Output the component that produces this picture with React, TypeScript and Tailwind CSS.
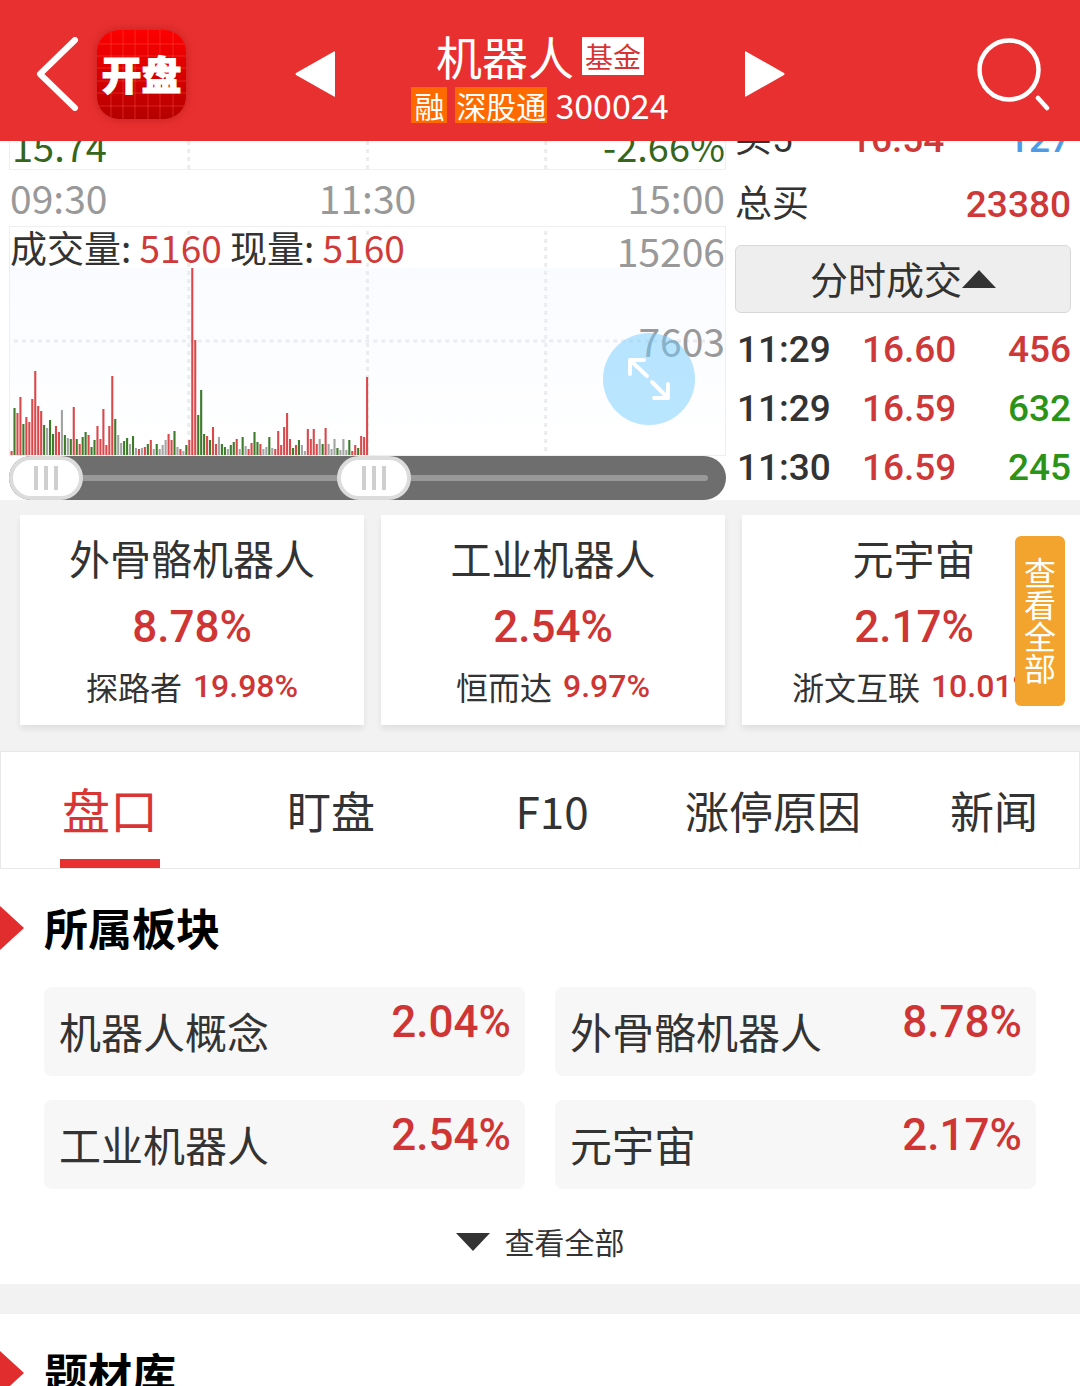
import { useState } from 'react';

/* ─── Data ──────────────────────────────────────────────────────────────────── */
type Tone = 'r' | 'g' | 'n';

const TONE_FILL: Record<Tone, string> = { r: '#d9494c', g: '#3d7a2a', n: '#a3a3a3' };

// one entry per minute: tone + height of the bar
const VOLUME =
  'r4 g47 r42 r58 g31 r38 r33 r56 r84 r49 r44 g30 n27 g35 g21 r29 r23 n45 g20 n17 ' +
  'g16 r48 g16 r11 g18 g23 r20 g8 g15 r29 r16 r46 r10 r29 r79 g36 n20 n12 g14 g17 ' +
  'n11 g19 n7 r6 n7 r8 g11 r15 n6 g11 n6 n10 n15 r21 r15 g24 n8 r6 n4 g10 ' +
  'r15 r187 r115 g40 g65 g21 r19 g15 r28 r11 n18 g11 g8 n6 g10 g13 r16 n6 g18 n9 ' +
  'r6 r12 g23 g13 r11 n6 n8 g18 n7 r6 r24 r10 r28 r42 r16 g7 r10 g15 n10 n4 ' +
  'r26 r16 r26 r11 n16 g11 r27 n11 n6 n16 g7 n5 n16 n5 g15 r4 r10 g7 r19 r18 r78';

const bars = VOLUME.split(' ').map(s => ({ tone: s[0] as Tone, h: Number(s.slice(1)) }));

const trades = [
  { time: '11:29', price: '16.60', vol: '456', up: true },
  { time: '11:29', price: '16.59', vol: '632', up: false },
  { time: '11:30', price: '16.59', vol: '245', up: false },
];

const themes = [
  { name: '外骨骼机器人', pct: '8.78%', lead: '探路者', leadPct: '19.98%' },
  { name: '工业机器人', pct: '2.54%', lead: '恒而达', leadPct: '9.97%' },
  { name: '元宇宙', pct: '2.17%', lead: '浙文互联', leadPct: '10.01%' },
];

const boards = [
  { name: '机器人概念', pct: '2.04%' },
  { name: '外骨骼机器人', pct: '8.78%' },
  { name: '工业机器人', pct: '2.54%' },
  { name: '元宇宙', pct: '2.17%' },
];

const TABS = ['盘口', '盯盘', 'F10', '涨停原因', '新闻'];

/* ─── Header ────────────────────────────────────────────────────────────────── */
function Header() {
  return (
    <header className="grid h-[141px] shrink-0 grid-cols-[1fr_490px_1fr] items-center bg-[#e93030] px-[30px] pt-[7px] text-white">
      <div className="flex items-center gap-[11px]">
        <button aria-label="返回" className="pl-[6px]">
          <svg width="50" height="74" viewBox="0 0 50 74" fill="none" stroke="currentColor" strokeWidth="6" strokeLinecap="round" strokeLinejoin="round">
            <path d="M39 3 4 37 39 71" />
          </svg>
        </button>
        <a href="#home" aria-label="开盘" className="block rounded-[22px] shadow-[0_0_10px_rgba(120,0,0,0.35)]">
          <svg width="89" height="89" viewBox="0 0 89 89">
            <defs>
              <linearGradient id="logo" x1="0" y1="0" x2="0" y2="1">
                <stop offset="0" stopColor="#fe0000" />
                <stop offset="1" stopColor="#b40000" />
              </linearGradient>
            </defs>
            <rect width="89" height="89" rx="22" fill="url(#logo)" />
            <path d="M14 2V87M26 0V89M38 0V89M51 0V89M63 0V89M76 2V87M2 14H87M0 26H89M0 38H89M0 51H89M0 63H89M2 76H87" stroke="#ff5a4a" strokeOpacity="0.4" />
            <text x="44.500" y="60" textAnchor="middle" fontSize="40" fontWeight="900" fill="#fff" stroke="#fff">开盘</text>
          </svg>
        </a>
      </div>

      <div className="flex items-center justify-between">
        <button aria-label="上一只">
          <svg width="40" height="46" viewBox="0 0 40 46"><path d="M39 0.500Q40 0 40 1V45Q40 46 39 45.500L1 24Q0 23 1 22Z" fill="#fff" /></svg>
        </button>
        <div className="flex flex-col items-center pt-4">
          <div className="flex items-start gap-2 pb-2">
            <h1 className="text-[46px] leading-[36px]">机器人</h1>
            <span className="bg-white px-[3px] text-[28px] leading-[38px] text-[#d63434]">基金</span>
          </div>
          <div className="flex items-center gap-2 text-[30px] leading-[36px]">
            <span className="bg-[#ff6a00] px-[3px]">融</span>
            <span className="bg-[#ff6a00] px-[1px]">深股通</span>
            <span className="text-[34px] leading-[44px]">300024</span>
          </div>
        </div>
        <button aria-label="下一只">
          <svg width="40" height="46" viewBox="0 0 40 46"><path d="M1 0.500Q0 0 0 1V45Q0 46 1 45.500L39 24Q40 23 39 22Z" fill="#fff" /></svg>
        </button>
      </div>

      <button aria-label="搜索" className="justify-self-end">
        <svg width="73" height="73" viewBox="0 0 73 73" fill="none" stroke="currentColor" strokeWidth="4.500">
          <circle cx="32" cy="32" r="29.500" />
          <path d="M61 60 70 70" strokeLinecap="round" />
        </svg>
      </button>
    </header>
  );
}

/* ─── Volume chart ──────────────────────────────────────────────────────────── */
function VolumeChart() {
  return (
    <div className="relative h-[230px] border border-[#efefef]">
      <svg className="block h-full w-full" viewBox="0 0 716 228" preserveAspectRatio="none">
        <defs>
          <linearGradient id="tint" x1="0" y1="0" x2="0" y2="1">
            <stop offset="0" stopColor="#f9fbff" />
            <stop offset="1" stopColor="#ffffff" />
          </linearGradient>
        </defs>
        <rect y="41" width="716" height="187" fill="url(#tint)" />
        <path d="M179 4V228M358 4V228M536.500 4V228M4 114H716" stroke="#ececef" strokeWidth="3" strokeDasharray="4 4" />
        {bars.map((b, i) => (
          <rect key={i} x={0.5 + i * 2.967} y={228 - b.h} width={2.1} height={b.h} fill={TONE_FILL[b.tone]} />
        ))}
      </svg>
      <p className="absolute left-0 top-0 text-[37px] leading-[40px]">
        成交量: <span className="text-[#cf3b3b]">5160</span> 现量: <span className="text-[#cf3b3b]">5160</span>
      </p>
      <span className="absolute right-0 top-0 text-[39px] leading-[46px] text-[#999]">15206</span>
      <span className="absolute right-0 top-[90px] text-[39px] leading-[46px] text-[#999]">7603</span>
      <button aria-label="全屏" className="absolute right-[30px] top-[106px] flex size-[92px] items-center justify-center rounded-full bg-[#73cbff]/50">
        <svg width="44" height="44" viewBox="0 0 44 44" fill="none" stroke="#fff" strokeWidth="4" strokeLinecap="round" strokeLinejoin="round">
          <path d="M3 17V3H17M3 3 20 19M41 27V41H27M41 41 25 25" />
        </svg>
      </button>
    </div>
  );
}

function RangeHandle({ label, start }: { label: string; start: number }) {
  const [value, setValue] = useState(start);
  return (
    <input
      type="range"
      aria-label={label}
      value={value}
      onChange={e => setValue(Number(e.target.value))}
      className="pointer-events-none absolute inset-0 m-0 h-11 w-full appearance-none bg-transparent [&::-webkit-slider-thumb]:pointer-events-auto [&::-webkit-slider-thumb]:h-11 [&::-webkit-slider-thumb]:w-[74px] [&::-webkit-slider-thumb]:appearance-none [&::-webkit-slider-thumb]:rounded-full [&::-webkit-slider-thumb]:border-4 [&::-webkit-slider-thumb]:border-solid [&::-webkit-slider-thumb]:border-[#dcdcdc] [&::-webkit-slider-thumb]:bg-white [&::-webkit-slider-thumb]:bg-[linear-gradient(90deg,#cfcfcf_4px,transparent_4px,transparent_10px,#cfcfcf_10px,#cfcfcf_14px,transparent_14px,transparent_20px,#cfcfcf_20px)] [&::-webkit-slider-thumb]:bg-[length:24px_24px] [&::-webkit-slider-thumb]:bg-center [&::-webkit-slider-thumb]:bg-no-repeat"
    />
  );
}

/* ─── Quote area ────────────────────────────────────────────────────────────── */
function Quote() {
  return (
    <section className="flex gap-[9px] bg-white px-[9px]">
      <div className="min-w-0 flex-1">
        {/* bottom edge of the price chart, scrolled under the header */}
        <div className="relative flex h-[29px] items-end justify-between overflow-hidden border-x border-b border-[#efefef] text-[38px] leading-[46px] text-[#35661b]">
          <svg className="absolute inset-0 h-full w-full" viewBox="0 0 716 28" preserveAspectRatio="none">
            <path d="M179 28V0M358 28V0M536.500 28V0" stroke="#ececef" strokeWidth="3" strokeDasharray="4 4" />
          </svg>
          <span className="pl-[2px]">15.74</span>
          <span>-2.66%</span>
        </div>
        <div className="flex h-14 items-center justify-between px-[1px] pb-[3px] text-[39px] leading-[44px] text-[#999]">
          <span>09:30</span>
          <span>11:30</span>
          <span>15:00</span>
        </div>
        <VolumeChart />
        <div className="relative flex h-11 items-center rounded-full bg-[#6e6e6e] px-[18px]">
          <div className="h-[6px] flex-1 rounded-full bg-[#999]" />
          <RangeHandle label="开始时间" start={0} />
          <RangeHandle label="结束时间" start={51} />
        </div>
      </div>

      <div className="w-[336px] shrink-0 text-[37px]">
        <div className="flex h-24 items-end overflow-hidden">
          <table className="w-full font-[Roboto,'Noto_Sans_CJK_SC',sans-serif] font-medium">
            <tbody>
              <tr className="h-[65px]">
                <th scope="row" className="w-[115px] p-0 text-left font-normal">买5</th>
                <td className="p-0 text-[#cf3838]">16.54</td>
                <td className="p-0 text-right text-[#4f9ae6]">127</td>
              </tr>
              <tr className="h-[65px]">
                <th scope="row" className="p-0 text-left font-normal">总买</th>
                <td className="p-0 text-right text-[#cf3838]" colSpan={2}>23380</td>
              </tr>
            </tbody>
          </table>
        </div>
        <button className="mt-2 flex h-[68px] w-full items-center justify-center rounded-md border border-[#d8d8d8] bg-[#eee] text-[38px]">
          <span className="pb-1">分时成交</span>
          <svg width="34" height="18" viewBox="0 0 34 18"><path d="M17 0 34 18H0Z" fill="#333" /></svg>
        </button>
        <table className="mt-[7px] w-full font-[Roboto,'Noto_Sans_CJK_SC',sans-serif] font-medium">
          <tbody>
            {trades.map((t, i) => (
              <tr key={i} className="h-[59px]">
                <td className="w-[127px] p-0 pl-[2px]">{t.time}</td>
                <td className="p-0 text-[#cf3838]">{t.price}</td>
                <td className={`p-0 text-right ${t.up ? 'text-[#cf3838]' : 'text-[#2b9418]'}`}>{t.vol}</td>
              </tr>
            ))}
          </tbody>
        </table>
      </div>
    </section>
  );
}

/* ─── Related themes ────────────────────────────────────────────────────────── */
function Themes() {
  return (
    <section className="relative bg-[#f2f2f2]">
      <div className="flex gap-[17px] overflow-x-auto px-5 pt-[15px] pb-[26px] [scrollbar-width:none]">
        {themes.map(t => (
          <a key={t.name} href="#theme" className="flex h-[210px] w-[344px] shrink-0 flex-col items-center bg-white pt-3 shadow-[0_4px_6px_rgba(0,0,0,0.08)]">
            <span className="text-[41px] leading-[60px]">{t.name}</span>
            <b className="font-[Roboto,sans-serif] text-[44px] leading-[80px] font-medium text-[#cf3535]">{t.pct}</b>
            <span className="flex items-center gap-[11px] text-[32px] leading-[38px]">
              {t.lead}
              <b className="font-[Roboto,sans-serif] font-medium text-[#cf3535]">{t.leadPct}</b>
            </span>
          </a>
        ))}
      </div>
      <button className="absolute right-[15px] top-9 flex h-[170px] w-[50px] items-center justify-center rounded-md bg-[#f3a42f] text-[32px] leading-[50px] text-white [writing-mode:vertical-rl]">
        查看全部
      </button>
    </section>
  );
}

/* ─── Tabs ──────────────────────────────────────────────────────────────────── */
function Tabs() {
  const [tab, setTab] = useState(TABS[0]);
  return (
    <nav className="grid h-[118px] auto-cols-[221px] grid-flow-col overflow-hidden border border-[#e8e8e8] bg-white">
      {TABS.map(t => (
        <button key={t} onClick={() => setTab(t)} className="flex justify-center pr-[3px]">
          <span className={t === tab
            ? 'flex h-full items-center border-b-[9px] border-[#e93030] px-[2px] pt-1 text-[48px] text-[#d93535]'
            : 'flex h-full items-center text-[44px]'}>
            {t}
          </span>
        </button>
      ))}
    </nav>
  );
}

function SectionTitle({ children }: { children: string }) {
  return (
    <div className="flex h-[118px] items-center gap-5">
      <svg width="24" height="44" viewBox="0 0 24 44"><path d="M0 0 24 22 0 44Z" fill="#e12d2d" /></svg>
      <h2 className="pb-[3px] text-[44px] font-bold text-black">{children}</h2>
    </div>
  );
}

export default function App() {
  return (
    <div className="flex h-screen flex-col overflow-hidden bg-white font-['Noto_Sans_CJK_SC',sans-serif] text-[#333]">
      <Header />
      <main className="min-h-0 flex-1 overflow-y-auto [scrollbar-width:none]">
        <Quote />
        <Themes />
        <Tabs />
        <section>
          <SectionTitle>所属板块</SectionTitle>
          <div className="grid grid-cols-2 gap-x-[30px] gap-y-6 px-11">
            {boards.map(b => (
              <a key={b.name} href="#board" className="flex h-[89px] items-start justify-between rounded-lg bg-[#f7f7f7] pl-[15px] pr-[14px]">
                <span className="text-[42px] leading-[88px]">{b.name}</span>
                <b className="font-[Roboto,sans-serif] text-[44px] leading-[70px] font-medium text-[#cf3535]">{b.pct}</b>
              </a>
            ))}
          </div>
          <button className="flex h-[95px] w-full items-center justify-center gap-[15px] pt-[10px] text-[30px]">
            <svg width="34" height="18" viewBox="0 0 34 18"><path d="M0 0H34L17 18Z" fill="#333" /></svg>
            查看全部
          </button>
        </section>
        <div className="h-[30px] bg-[#f2f2f2]" />
        <section>
          <SectionTitle>题材库</SectionTitle>
        </section>
      </main>
    </div>
  );
}
